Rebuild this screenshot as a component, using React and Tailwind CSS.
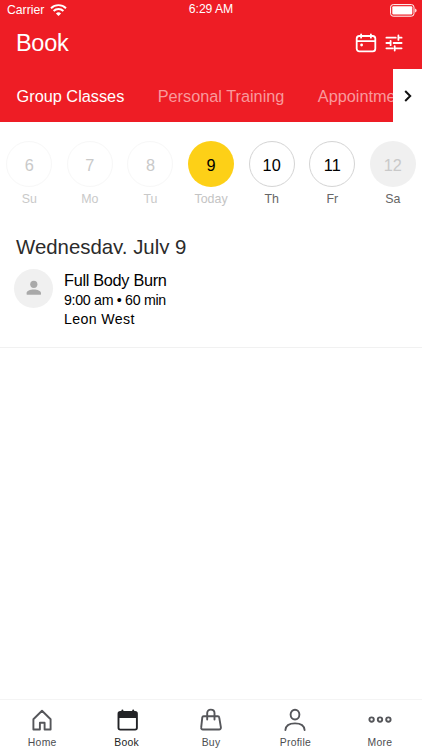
import React, { useState } from 'react';
import clsx from 'clsx';

const DAYS = [
  { date: 6, label: 'Su', status: 'past' },
  { date: 7, label: 'Mo', status: 'past' },
  { date: 8, label: 'Tu', status: 'past' },
  { date: 9, label: 'Today', status: 'today' },
  { date: 10, label: 'Th', status: 'open' },
  { date: 11, label: 'Fr', status: 'open' },
  { date: 12, label: 'Sa', status: 'closed' },
];

const CIRCLE_STYLES = {
  past: 'border border-[#f7f7f7] text-[#c9c9c9]',
  today: 'bg-[#fdd017] text-black',
  open: 'border border-[#d4d4d4] text-black',
  closed: 'bg-[#f0f0f0] text-[#c9c9c9]',
};

const LABEL_STYLES = {
  past: 'text-[#c9c9c9]',
  today: 'text-[#c4c4c4]',
  open: 'text-[#666]',
  closed: 'text-[#666]',
};

const CLASSES = [
  { id: 1, name: 'Full Body Burn', time: '9:00 am • 60 min', instructor: 'Leon West' },
];

function StatusBar() {
  return (
    <div className="flex h-5 items-center justify-between pl-[7px] pr-[5px] text-[12.2px] leading-[20px]">
      <div className="flex w-[90px] items-center gap-[6px]">
        <span>Carrier</span>
        <svg width="17" height="12" viewBox="0 0 17 12" fill="none" stroke="#fff" strokeWidth="1.9">
          <path d="M1 4.2a10.8 10.8 0 0 1 15 0" />
          <path d="M3.6 7a7 7 0 0 1 9.8 0" />
          <path d="M8.5 12 5.9 9.4a3.8 3.8 0 0 1 5.2 0z" fill="#fff" stroke="none" />
        </svg>
      </div>
      <span className="pb-[2px] pr-[2px] tracking-[-0.05px]">6:29 AM</span>
      <div className="flex w-[90px] justify-end">
        <svg width="27" height="13" viewBox="0 0 27 13" fill="none">
          <rect x="0.6" y="0.6" width="23.4" height="11.6" rx="2.6" stroke="#fff" strokeWidth="1" />
          <rect x="2.3" y="2.3" width="20" height="8.2" rx="1" fill="#fff" />
          <path d="M25.2 4.4c1.8.6 1.8 3.4 0 4z" fill="#fff" />
        </svg>
      </div>
    </div>
  );
}

function CalendarIcon() {
  return (
    <svg width="22" height="20" viewBox="0 0 22 20" fill="none" stroke="#fff" strokeWidth="1.8" strokeLinecap="round">
      <rect x="1.7" y="3" width="18.6" height="15.4" rx="2.6" />
      <path d="M2 8.1h18M6.1 1.3v3.4M15.9 1.3v3.4" />
      <circle cx="6.6" cy="12" r="1.4" fill="#fff" stroke="none" />
    </svg>
  );
}

function TuneIcon() {
  return (
    <svg width="18" height="18" viewBox="0 0 18 18" fill="none" stroke="#fff" strokeWidth="1.8" strokeLinecap="round">
      <path d="M1.4 3.7h9.4M13.4 3.7h3.2M13.4 1.5v4.4" />
      <path d="M1.4 9h4M5.6 6.8v4.4M8.6 9h8" />
      <path d="M1.4 14.3h6.4M9.7 12.1v4.4M9.7 14.3h6.9" />
    </svg>
  );
}

function TabIcon({ name }) {
  const props = {
    width: 24,
    height: 24,
    viewBox: '0 0 24 24',
    fill: 'none',
    stroke: '#55565a',
    strokeWidth: 1.9,
    strokeLinejoin: 'round',
    strokeLinecap: 'round',
  };

  if (name === 'home') {
    return (
      <svg {...props}>
        <path d="M3.4 11.2 12 2.7l8.6 8.5v10.3h-6v-6.7H9.9v6.7H3.4z" />
      </svg>
    );
  }
  if (name === 'book') {
    return (
      <svg {...props} stroke="#222326">
        <rect x="3.5" y="4" width="18.4" height="17.6" rx="1.8" />
        <path d="M3.5 10V5.3c0-.8.5-1.3 1.3-1.3h15.8c.8 0 1.3.5 1.3 1.3V10z" fill="#222326" stroke="none" />
        <path d="M7.4 2.4v3M18.2 2.4v3" strokeWidth="2" />
      </svg>
    );
  }
  if (name === 'buy') {
    return (
      <svg {...props}>
        <path d="M4.6 8.2h14.2c.8 0 1.3.5 1.4 1.2l1.7 10c.1 1.2-.6 2.1-1.8 2.1H3.9c-1.2 0-1.9-.9-1.7-2.1l1.1-10c.1-.7.5-1.2 1.3-1.2z" />
        <path d="M8.2 11.6V5.1c0-2 1.3-3.5 3.6-3.5s3.7 1.5 3.7 3.5v6.5" />
      </svg>
    );
  }
  if (name === 'profile') {
    return (
      <svg {...props}>
        <ellipse cx="12" cy="6.6" rx="4.4" ry="4.9" />
        <path d="M2.4 22c.4-4.6 3.8-6.6 9.6-6.6s9.2 2 9.6 6.6" />
      </svg>
    );
  }
  return (
    <svg {...props} strokeWidth="1.9">
      <circle cx="3.6" cy="11.6" r="2.2" />
      <circle cx="12" cy="11.6" r="2.2" />
      <circle cx="20.4" cy="11.6" r="2.2" />
    </svg>
  );
}

const NAV = [
  { id: 'home', label: 'Home' },
  { id: 'book', label: 'Book' },
  { id: 'buy', label: 'Buy' },
  { id: 'profile', label: 'Profile' },
  { id: 'more', label: 'More' },
];

export default function App() {
  const [active, setActive] = useState('book');

  return (
    <div className="flex h-[750px] w-[422px] flex-col overflow-hidden bg-white font-['Liberation_Sans',Arial,sans-serif] text-black">
      <header className="h-[122px] shrink-0 bg-[#ee1d25] text-white">
        <StatusBar />
        <div className="flex h-[49px] items-center justify-between pb-[4px] pl-[16px] pr-[19.5px]">
          <h1 className="text-[23.5px] leading-[30px] tracking-[-0.3px]">Book</h1>
          <div className="flex items-center gap-[8px]">
            <CalendarIcon />
            <TuneIcon />
          </div>
        </div>
        <nav className="flex h-[53px]">
          <div className="flex min-w-0 flex-1 items-center gap-[33.4px] overflow-hidden whitespace-nowrap pl-[16.6px] pt-[1px] text-[16.3px]">
            <span>Group Classes</span>
            <span className="text-[#f9999c]">Personal Training</span>
            <span className="text-[#f9999c]">Appointments</span>
          </div>
          <button className="flex w-[29px] items-center justify-center bg-white">
            <svg width="8" height="12" viewBox="0 0 8 12" fill="none" stroke="#111" strokeWidth="2">
              <path d="M1.2 1 6.2 6l-5 5" />
            </svg>
          </button>
        </nav>
      </header>

      <div className="flex shrink-0 gap-[14.6px] pl-[6.3px] pt-[19.4px]">
        {DAYS.map((day) => (
          <div key={day.date} className="flex w-[46px] shrink-0 flex-col items-center">
            <div className={clsx('flex h-[46px] w-[46px] items-center justify-center rounded-full pt-[1px] text-[16.3px]', CIRCLE_STYLES[day.status])}>
              {day.date}
            </div>
            <span className={clsx('mt-[3.6px] text-[12.4px] leading-[16px]', LABEL_STYLES[day.status])}>{day.label}</span>
          </div>
        ))}
      </div>

      <section className="flex-1 pt-[27px]">
        <h2 className="h-[20px] overflow-hidden pl-[16px] text-[20.4px] leading-[27px] text-[#2b2b2b]">Wednesday, July 9</h2>
        {CLASSES.map((item) => (
          <div key={item.id} className="flex h-[94px] gap-[11px] border-b border-[#f1f1f1] pl-[14px] pt-[15px]">
            <div className="flex h-[39px] w-[39px] items-center justify-center rounded-full bg-[#f0f0f0]">
              <svg width="16" height="16" viewBox="0 0 16 16" fill="#a9a9a9">
                <circle cx="7.8" cy="4.3" r="3.6" />
                <path d="M.6 13c0-2.4 3.6-3.6 7.2-3.6S15 10.600 15 13v.9c0 .6-.3.900-.9.900H1.500c-.6 0-.9-.3-.9-.9z" />
              </svg>
            </div>
            <div>
              <div className="text-[16.3px] leading-[22px] tracking-[-0.3px]">{item.name}</div>
              <div className="text-[14.2px] leading-[19px] tracking-[-0.3px]">{item.time}</div>
              <div className="text-[14.2px] leading-[19px] tracking-[0.35px]">{item.instructor}</div>
            </div>
          </div>
        ))}
      </section>

      <footer className="flex h-[51px] shrink-0 border-t border-[#f4f4f4]">
        {NAV.map((tab) => (
          <button key={tab.id} onClick={() => setActive(tab.id)} className="flex flex-1 flex-col items-center pt-[8px]">
            <TabIcon name={tab.id} />
            <span className={clsx('mt-[4px] text-[10.4px] leading-[14px] tracking-[0.25px]', active === tab.id ? 'text-[#222]' : 'text-[#4c4d50]')}>
              {tab.label}
            </span>
          </button>
        ))}
      </footer>
    </div>
  );
}
